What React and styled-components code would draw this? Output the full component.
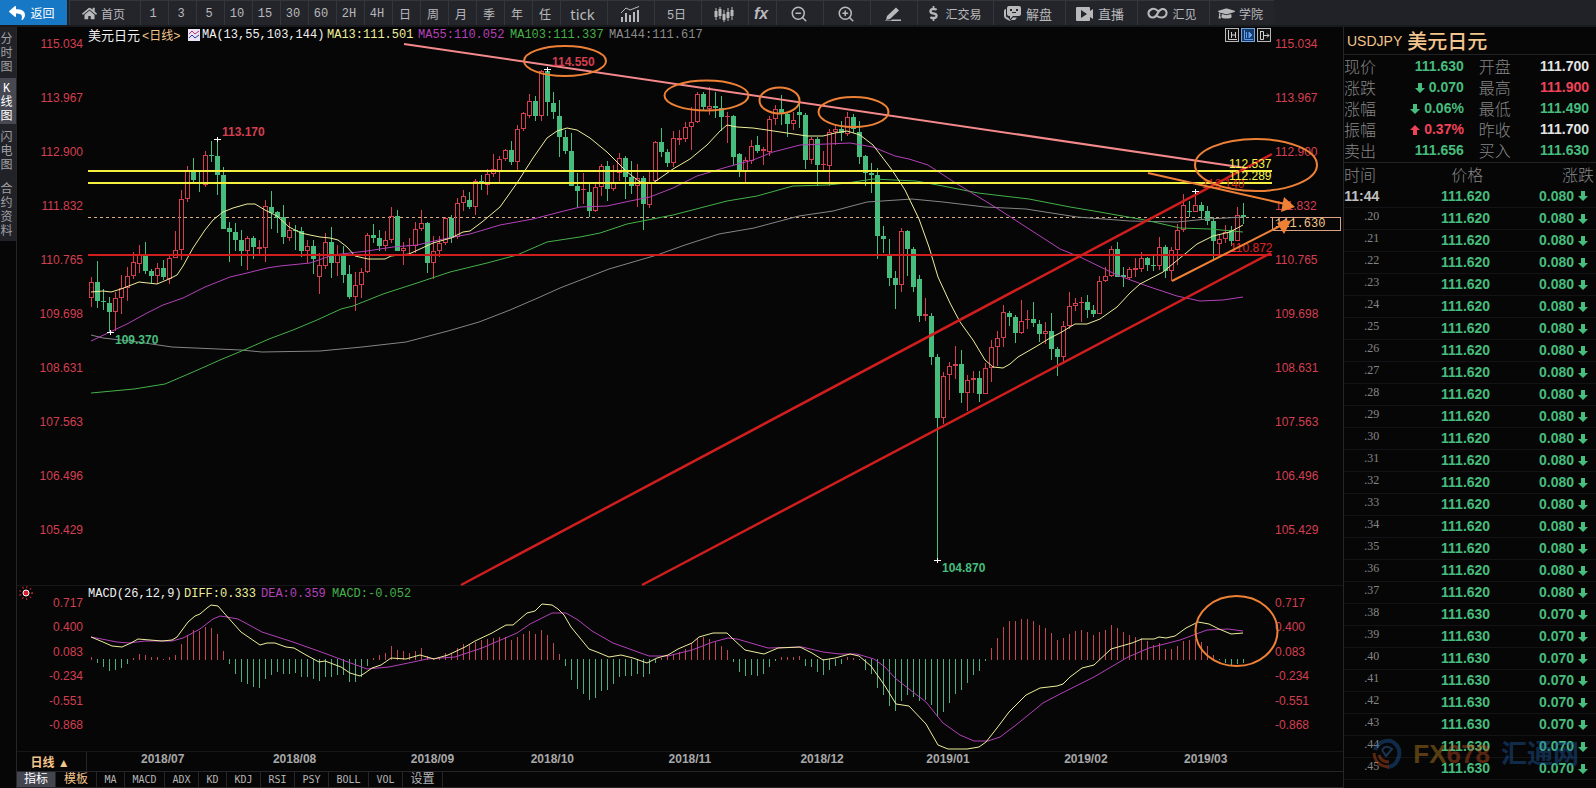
import React from 'react';
import styled, { createGlobalStyle } from 'styled-components';
import {
  FaReply,
  FaHome,
  FaDollarSign,
  FaGraduationCap,
} from 'react-icons/fa';
import { ZoomIn, ZoomOut } from 'lucide-react';

const GlobalStyle = createGlobalStyle`
  * {
    box-sizing: border-box;
  }
  body {
    margin: 0;
    background-color: #060607;
    font-family: 'Liberation Sans', 'Noto Sans CJK SC', sans-serif;
    font-size: 12px;
  }
  button {
    margin: 0;
    padding: 0;
    border: none;
    font-family: inherit;
    cursor: pointer;
  }
`;

const MONO = "'Liberation Mono', 'Noto Sans CJK SC', monospace";
const RED = '#d43f50';
const GREEN = '#46bd7d';
const GOLD = '#f3c48b';
const YELLOW = '#eeee9a';
const PURPLE = '#b341b8';
const ORANGE = '#ee8136';

// candles - [high, body top, body bottom, low, 1 = up], thirds of a pixel
const candleGroups = [
  {
    base: 390,
    rows: [
      [440, 457, 503, 530, 1], [392, 456, 512, 534, 0], [478, 513, 515, 541, 0], [502, 519, 545, 607, 0],
      [485, 505, 545, 603, 1], [435, 475, 503, 553, 1], [412, 438, 473, 512, 1], [367, 397, 437, 448, 1],
      [346, 377, 402, 430, 1], [335, 377, 423, 431, 0], [417, 423, 437, 460, 0], [398, 414, 437, 462, 1],
      [390, 414, 440, 450, 0], [378, 385, 446, 461, 1], [303, 361, 382, 385, 1], [179, 208, 358, 390, 1],
      [108, 124, 206, 215, 1], [84, 123, 149, 155, 0], [125, 159, 162, 185, 0], [62, 76, 163, 170, 1],
      [34, 76, 78, 96, 0], [28, 78, 134, 195, 0], [110, 135, 296, 298, 0], [275, 294, 304, 396, 0],
      [280, 306, 329, 362, 0], [300, 330, 362, 408, 0], [318, 325, 361, 420, 1], [318, 324, 350, 388, 0],
      [330, 352, 355, 373, 1], [210, 228, 352, 396, 1], [182, 231, 248, 298, 0], [243, 248, 262, 308, 0],
      [225, 261, 320, 341, 0], [275, 301, 322, 334, 1], [285, 300, 302, 360, 0], [290, 304, 362, 380, 0],
      [330, 349, 361, 400, 1], [330, 349, 386, 432, 0], [368, 405, 440, 492, 1], [309, 337, 406, 418, 1],
      [290, 337, 398, 443, 0], [345, 374, 398, 437, 1], [348, 377, 434, 458, 0], [405, 432, 500, 506, 0],
      [426, 466, 500, 542, 1], [415, 427, 464, 503, 1], [309, 316, 425, 428, 1], [282, 315, 323, 338, 0],
      [300, 324, 347, 364, 0], [303, 331, 346, 362, 1], [231, 259, 328, 338, 1], [240, 259, 362, 362, 0],
      [335, 355, 362, 405, 1], [325, 346, 348, 374, 1], [275, 298, 348, 368, 1], [240, 279, 296, 302, 1],
      [276, 279, 398, 428, 0], [318, 364, 398, 448, 1], [318, 340, 363, 381, 1], [260, 265, 338, 345, 1],
      [256, 264, 322, 338, 0], [205, 220, 320, 328, 1], [180, 199, 218, 243, 1], [186, 210, 230, 237, 0],
      [146, 153, 229, 254, 1], [135, 153, 160, 180, 0], [117, 132, 164, 196, 1], [72, 118, 130, 140, 1],
      [78, 88, 122, 160, 1], [58, 61, 86, 92, 1], [32, 60, 95, 106, 0], [-16, -2, 95, 122, 1],
    ],
  },
  {
    base: 150,
    rows: [
      [185, 191, 237, 243, 1], [132, 154, 197, 205, 1], [138, 153, 197, 212, 0], [60, 63, 196, 213, 1],
      [58, 63, 155, 197, 0], [127, 159, 185, 207, 0], [150, 198, 260, 321, 0], [240, 262, 302, 311, 0],
      [250, 303, 407, 407, 0], [368, 408, 422, 470, 0], [370, 417, 420, 462, 1], [402, 426, 482, 500, 0],
      [395, 411, 482, 485, 1], [341, 348, 409, 438, 1], [334, 349, 416, 452, 0], [345, 400, 416, 423, 1],
      [309, 325, 368, 392, 1], [318, 324, 380, 448, 0], [334, 381, 408, 432, 0], [342, 385, 407, 470, 1],
      [378, 384, 461, 540, 0], [360, 399, 463, 474, 1], [274, 277, 393, 395, 1], [233, 276, 305, 321, 0],
      [296, 306, 338, 350, 0], [243, 265, 337, 352, 1], [240, 266, 269, 284, 1], [216, 232, 265, 277, 1],
      [170, 216, 230, 300, 1], [126, 132, 214, 218, 1], [126, 132, 171, 180, 0], [110, 169, 176, 194, 1],
      [125, 169, 174, 204, 0], [138, 175, 200, 242, 0], [186, 198, 200, 278, 1], [195, 198, 320, 346, 0],
      [308, 314, 364, 380, 0], [320, 331, 363, 395, 1], [269, 289, 331, 342, 1], [258, 285, 303, 308, 0],
      [290, 299, 303, 346, 1], [198, 208, 304, 318, 1], [166, 178, 206, 226, 1], [135, 177, 192, 226, 0],
      [188, 192, 221, 262, 0], [185, 210, 220, 240, 1], [160, 186, 194, 234, 0], [190, 195, 329, 356, 0],
      [262, 268, 329, 342, 1], [262, 267, 345, 408, 0], [302, 342, 344, 363, 1], [238, 247, 346, 408, 1],
      [226, 237, 244, 286, 1], [213, 238, 247, 273, 0], [186, 202, 250, 258, 1], [192, 202, 236, 250, 0],
      [212, 246, 320, 341, 0], [315, 320, 368, 407, 0], [340, 369, 374, 430, 0], [355, 375, 557, 626, 0],
    ],
  },
  {
    base: 660,
    rows: [
      [17, 48, 55, 98, 0], [57, 108, 174, 197, 0], [153, 174, 194, 267, 0], [25, 34, 194, 217, 1],
      [30, 33, 87, 168, 0], [80, 87, 200, 215, 0], [165, 178, 288, 306, 0], [233, 283, 288, 303, 1],
      [280, 288, 411, 434, 0], [402, 411, 593, 1020, 0], [455, 468, 593, 613, 1], [427, 438, 464, 540, 1],
      [378, 432, 436, 476, 1], [390, 432, 518, 548, 0], [466, 480, 518, 572, 1], [453, 475, 479, 519, 1],
      [452, 474, 521, 545, 0], [428, 445, 521, 522, 1], [361, 381, 443, 486, 1], [332, 354, 380, 437, 1],
      [256, 277, 353, 380, 1], [273, 279, 290, 317, 0], [286, 291, 339, 368, 0], [240, 303, 339, 343, 1],
      [270, 297, 300, 328, 1], [246, 297, 308, 320, 0], [300, 312, 341, 366, 0], [307, 334, 341, 371, 1],
      [280, 333, 386, 420, 0], [381, 387, 410, 468, 0],
    ],
  },
  {
    base: 540,
    rows: [
      [424, 439, 530, 552, 1], [336, 379, 437, 446, 1], [353, 370, 377, 392, 1], [350, 366, 369, 427, 1],
      [345, 366, 390, 415, 0], [376, 390, 401, 410, 0], [289, 303, 401, 403, 1], [262, 289, 302, 306, 1],
      [198, 208, 287, 292, 1], [186, 207, 289, 290, 0], [262, 287, 290, 320, 0], [260, 268, 293, 301, 1],
      [235, 265, 268, 291, 1], [217, 235, 266, 276, 1], [230, 235, 255, 272, 0], [225, 255, 257, 272, 0],
      [171, 202, 257, 269, 1], [196, 202, 272, 293, 0], [200, 211, 272, 304, 1], [132, 151, 208, 255, 1],
      [42, 76, 148, 155, 1], [62, 94, 96, 110, 0], [38, 76, 95, 97, 1], [66, 75, 93, 118, 0],
      [78, 93, 122, 135, 0], [110, 124, 182, 241, 0], [165, 178, 191, 225, 1], [136, 157, 177, 190, 1],
      [138, 150, 182, 197, 0], [80, 107, 181, 182, 1], [68, 105, 110, 132, 0],
    ],
  },
];

const candles = candleGroups.flatMap(({ base, rows }) =>
  rows.map(([h, t, b, l, up]) => ({
    high: Math.round((base + h) / 3),
    top: Math.round((base + t - 1) / 3),
    bottom: Math.round((base + b + 1) / 3),
    low: Math.round((base + l) / 3),
    up,
  }))
);

// MACD bar ends, zero is 238
const macdBars = [
  232, 248, 260, 272, 270, 264, 252, 235, 221, 224, 231, 231, 236, 232, 224, 192, 165, 150, 152, 141,
  143, 163, 213, 251, 283, 305, 312, 320, 323, 297, 285, 276, 283, 283, 278, 290, 290, 296, 302, 290,
  290, 286, 285, 306, 305, 290, 257, 234, 225, 219, 198, 210, 214, 218, 213, 205, 228, 236, 233, 218,
  220, 205, 192, 192, 185, 180, 176, 174, 172, 172, 180, 172, 162, 153, 163, 150, 165, 188, 222, 258,
  300, 327, 342, 360, 354, 333, 330, 312, 292, 289, 289, 282, 292, 282, 250, 234, 226, 222, 215, 208,
  190, 174, 170, 177, 186, 198, 210, 246, 277, 288, 285, 287, 283, 262, 242, 232, 231, 231, 228, 258,
  262, 276, 286, 270, 259, 252, 232, 233, 240, 270, 283, 324, 345, 378, 393, 363, 345, 351, 362, 361,
  376, 410, 396, 369, 342, 331, 309, 286, 273, 243, 204, 173, 140, 122, 123, 116, 117, 122, 134, 144,
  160, 180, 174, 163, 152, 149, 155, 164, 155, 150, 134, 143, 155, 165, 170, 175, 182, 194, 190, 207,
  207, 197, 182, 180, 176, 187, 198, 225, 240, 250, 258, 252, 250,
];

const ma13 =
  '91,292 103,291 111,292 121,289 139,282 157,284 169,279 177,275 183,266 193,248 205,230 213,220 223,212 233,208 247,204 255,204 265,210 277,216 289,227 301,233 310,235 320,237 330,238 338,240 347,247 355,256 368,259 385,259 391,256 409,254 420,249 433,243 451,238 463,232 470,231 482,222 500,207 517,183 533,158 547,138 557,131 567,128 577,130 590,138 607,152 627,172 640,182 653,183 673,169 690,159 707,145 720,131 727,125 737,127 753,128 767,130 787,133 807,136 823,136 835,133 847,131 860,135 873,145 892,170 905,190 919,219 929,247 938,277 950,303 960,322 973,340 985,360 993,367 1003,368 1010,364 1018,357 1037,346 1050,338 1060,333 1075,324 1087,324 1100,319 1117,307 1130,293 1140,284 1163,272 1180,258 1197,244 1213,236 1230,232 1243,225';
const ma55 =
  '91,341 110,332 127,324 147,313 163,305 183,298 205,287 230,277 247,273 267,268 280,266 310,263 333,255 367,251 393,247 417,245 443,239 470,234 500,225 533,219 560,212 580,207 607,206 630,201 650,197 673,188 697,176 727,167 753,160 773,152 800,145 827,144 850,143 873,147 895,156 909,159 928,165 954,182 995,207 1026,227 1060,249 1080,257 1117,275 1147,286 1177,296 1200,301 1223,300 1243,297';
const ma103 =
  '91,393 134,389 165,384 193,372 220,360 244,350 269,339 293,330 317,320 341,309 353,306 383,294 417,283 450,272 487,263 517,255 547,242 560,240 580,237 600,233 627,224 673,215 727,201 757,196 793,186 827,185 847,183 873,179 916,181 943,186 978,193 1029,199 1070,207 1094,211 1145,220 1180,228 1210,229 1243,232';
const ma144 =
  '91,335 103,338 138,342 172,347 241,350 262,352 320,351 362,347 406,342 448,331 479,322 510,310 540,297 560,288 609,269 657,255 685,245 719,234 754,228 799,216 833,211 867,202 912,199 943,202 985,207 1026,209 1077,217 1130,221 1177,222 1207,219 1243,217';
const diffLine =
  '91,637 103,642 112,646 122,647 131,643 138,639 162,641 172,640 177,637 188,622 195,616 200,614 207,608 211,605 218,606 224,613 241,632 260,645 267,643 275,643 286,647 294,648 306,655 319,662 325,661 341,667 350,673 360,676 365,673 372,668 381,665 391,658 406,659 413,657 420,655 434,659 448,655 465,647 475,641 492,633 506,625 513,625 527,613 535,611 542,604 552,605 558,609 564,615 571,627 589,649 597,652 609,657 621,655 633,658 647,663 657,658 668,655 678,649 692,643 699,637 713,633 727,633 733,639 745,650 764,654 778,648 800,647 812,653 823,660 835,658 850,654 859,656 871,666 885,686 896,704 909,706 926,724 938,745 948,749 967,749 979,747 986,742 997,728 1009,712 1026,695 1040,688 1057,686 1063,684 1070,677 1082,668 1094,665 1111,649 1132,643 1142,639 1154,639 1159,637 1166,638 1175,636 1186,628 1198,622 1209,624 1219,629 1231,634 1243,633';
const deaLine =
  '91,637 117,642 129,643 145,641 172,641 183,638 200,629 213,619 220,616 227,617 238,619 262,632 293,642 324,653 348,662 367,669 389,667 413,662 427,659 455,657 482,648 517,633 530,624 544,617 552,613 566,613 578,620 592,631 613,643 649,656 668,656 692,650 713,642 728,638 737,639 768,648 802,647 823,652 840,654 857,654 874,659 885,667 895,678 909,689 926,702 943,723 960,735 974,741 988,741 1000,737 1016,725 1043,703 1060,694 1094,677 1128,657 1149,648 1180,640 1207,630 1228,629 1243,631';

const priceLabels = ['115.034', '113.967', '112.900', '111.832', '110.765', '109.698', '108.631', '107.563', '106.496', '105.429'];
const macdLabels = ['0.717', '0.400', '0.083', '-0.234', '-0.551', '-0.868'];
const months = ['2018/07', '2018/08', '2018/09', '2018/10', '2018/11', '2018/12', '2019/01', '2019/02', '2019/03'];

//layout

const Page = styled.div`
  display: flex;
  flex-direction: column;
  min-height: 100vh;
  color: #b4b4b4;
`;

const Main = styled.main`
  display: flex;
  flex: 1;
`;

//toolbar

const Toolbar = styled.nav`
  display: flex;
  height: 27px;
  background-color: #202228;
  border-bottom: 2px solid #191a1e;
`;

const ToolButton = styled.button`
  display: flex;
  align-items: center;
  justify-content: center;
  gap: ${(props) => props.$gap || 4}px;
  width: ${(props) => props.$w || 28}px;
  padding: 1px 3px 0 0;
  border-left: 1px solid #34363c;
  border-top: 1px solid #34363c;
  background-color: #23252b;
  color: #b9b9bb;
  font-family: ${MONO};
  font-size: ${(props) => props.$size || 12}px;
`;

const BackButton = styled(ToolButton)`
  border: none;
  margin-right: 2px;
  background-color: #1779c6;
  color: #fff;
`;

const TickButton = styled(ToolButton)`
  font-family: 'Noto Sans', sans-serif;
`;

const FxButton = styled(ToolButton)`
  font-family: 'Liberation Sans', sans-serif;
  font-style: italic;
  font-weight: bold;
`;

//side menu

const Side = styled.nav`
  width: 16px;
`;

const SideButton = styled.button`
  display: block;
  width: 16px;
  padding: ${(props) => props.$pad};
  background-color: ${(props) => (props.$on ? '#464852' : '#202228')};
  color: ${(props) => (props.$on ? '#fff' : '#a0a0a2')};
  font-family: ${MONO};
  font-size: 12px;
  line-height: 14px;
  word-break: break-all;
`;

//chart

const Work = styled.section`
  flex: 1;
  min-width: 0;
  border-left: 1px solid #26262a;
`;

const Pane = styled.div`
  display: grid;
  grid-template-columns: 71px 1fr 71px;
  border-bottom: 1px solid #17171a;
`;

const Axis = styled.div`
  position: relative;
  display: flex;
  flex-direction: column;
  justify-content: space-between;
  padding: ${(props) => props.$pad};
  color: ${RED};
  line-height: 14px;
  text-align: ${(props) => props.$align || 'left'};
`;

const CurrentPrice = styled.div`
  position: absolute;
  top: 190px;
  left: 0;
  width: 69px;
  height: 14px;
  padding-left: 2px;
  border: 1px solid #dfa183;
  color: ${GOLD};
  font-family: ${MONO};
  line-height: 13px;
`;

const SunMark = styled.svg`
  position: absolute;
  top: 0;
  left: 2px;
`;

const Plot = styled.div`
  min-width: 0;
`;

const Legend = styled.div`
  display: flex;
  align-items: center;
  height: 15px;
  font-family: ${MONO};
  white-space: nowrap;
`;

const LegendIcon = styled.svg`
  margin-right: 2px;
`;

const LegendItem = styled.span`
  width: ${(props) => props.$w}px;
  color: ${(props) => props.$color};
  font-size: ${(props) => props.$size || 12}px;
`;

const LegendButtons = styled.span`
  display: flex;
  gap: 2px;
  margin: 0 1px 0 auto;
`;

const SmallButton = styled.button`
  width: 14px;
  height: 14px;
  border: 1px solid ${(props) => (props.$on ? '#6fa4de' : '#b8b8b8')};
  background-color: ${(props) => (props.$on ? '#173b6c' : '#111')};
  color: ${(props) => (props.$on ? '#5e9ee8' : '#d0d0d0')};

  svg {
    display: block;
  }
`;

const Graph = styled.svg`
  position: relative;
  z-index: 1;
  display: block;
  width: 100%;
  height: ${(props) => props.$h}px;
  overflow: visible;
  pointer-events: none;
`;

const Mark = styled.text`
  fill: ${(props) => props.$color};
  font-family: 'Liberation Sans', sans-serif;
  font-size: 12px;
  font-weight: ${(props) => (props.$bold ? 'bold' : 'normal')};
`;

const DateRow = styled.div`
  display: grid;
  grid-template-columns: 70px 1fr 72px;
  height: 20px;
  border-bottom: 1px solid #26262a;
`;

const PeriodButton = styled.button`
  padding-right: 3px;
  border-right: 1px solid #26262a;
  background-color: transparent;
  color: ${GOLD};
  font-size: 12px;
  font-weight: bold;
`;

const Dates = styled.div`
  display: grid;
  grid-template-columns: 132fr 138fr 120fr 138fr 132fr 126fr 138fr 120fr 89fr;
  padding-left: 52px;
`;

const DateLabel = styled.span`
  padding-left: 2px;
  color: #a8a8a8;
  font-weight: bold;
  line-height: 15px;
`;

const Tabs = styled.div`
  display: flex;
  height: 15px;
`;

const Tab = styled.button`
  width: ${(props) => props.$w}px;
  border-right: 1px solid #26262a;
  background-color: ${(props) => (props.$on ? '#43454f' : 'transparent')};
  color: ${(props) => props.$color || '#b4b4b4'};
  font-family: 'DejaVu Sans Mono', 'Noto Sans CJK SC', monospace;
  font-size: ${(props) => (props.$cjk ? 12 : 10)}px;
  line-height: 13px;
`;

const ScrollTrack = styled.div`
  height: 3px;
  padding-left: 42%;
  border-top: 1px solid #26262a;
`;

const ScrollThumb = styled.div`
  width: 180px;
  height: 2px;
  background-color: #34343a;
`;

//quote panel

const Quote = styled.aside`
  position: relative;
  width: 253px;
  border-left: 1px solid #26262a;
`;

const QuoteTitle = styled.h1`
  display: flex;
  align-items: center;
  gap: 5px;
  height: 28px;
  margin: 0;
  padding-left: 3px;
  border-bottom: 1px solid #222226;
  color: ${GOLD};
  font-size: 14px;
  font-weight: normal;
`;

const QuoteName = styled.span`
  font-family: 'Noto Sans CJK SC', sans-serif;
  font-size: 20px;
  font-weight: 500;
`;

const QuoteGrid = styled.dl`
  display: grid;
  grid-template-columns: 32px 9fr 47px 8fr;
  grid-auto-rows: 21px;
  height: 107px;
  margin: 0;
  padding: 1px 7px 0 0;
  line-height: 21px;
`;

const QuoteLabel = styled.dt`
  color: #858585;
  font-family: 'Noto Sans CJK SC', sans-serif;
  font-size: 16px;
  font-weight: 300;
  line-height: 20px;
  text-align: right;
`;

const num = `
  font-family: 'Liberation Sans', sans-serif;
  font-size: 14px;
  font-weight: bold;
`;

const QuoteValue = styled.dd`
  ${num}
  margin: 0;
  color: ${(props) => props.$color};
  text-align: right;
`;

const TickTable = styled.table`
  width: 100%;
  border-collapse: collapse;
  table-layout: fixed;
  border-top: 1px solid #222226;
`;

const Th = styled.th`
  width: ${(props) => props.$w};
  height: 23px;
  padding: 0 ${(props) => props.$pad || 0}px 0 0;
  color: #858585;
  font-family: 'Noto Sans CJK SC', sans-serif;
  font-size: 16px;
  font-weight: 300;
  line-height: 21px;
  text-align: ${(props) => props.$align || 'right'};
  white-space: nowrap;
`;

const Td = styled.td`
  ${num}
  height: 22px;
  padding: 0 ${(props) => props.$pad || 0}px 0 0;
  border-bottom: 1px solid #131316;
  color: ${GREEN};
  line-height: 21px;
  text-align: right;
`;

const TimeTd = styled(Td)`
  color: ${(props) => (props.$first ? '#c0c0c0' : '#858585')};
  font-family: ${(props) =>
    props.$first ? "'Liberation Sans', sans-serif" : "'Liberation Serif', serif"};
  font-size: ${(props) => (props.$first ? 14 : 12)}px;
  font-weight: ${(props) => (props.$first ? 'bold' : 'normal')};
  line-height: ${(props) => (props.$first ? 21 : 16)}px;
  vertical-align: top;
`;

const Watermark = styled.div`
  position: absolute;
  right: 17px;
  bottom: 19px;
  display: flex;
  align-items: center;
  gap: 11px;
  font-size: 26px;
  font-weight: bold;
  line-height: 34px;
  opacity: 0.42;
  pointer-events: none;
`;

const WatermarkText = styled.span`
  color: ${(props) => props.$color};
`;

const ArrowValue = styled.span`
  display: flex;
  flex-direction: ${(props) => (props.$before ? 'row-reverse' : 'row')};
  align-items: center;
  justify-content: ${(props) => (props.$before ? 'flex-start' : 'flex-end')};
  gap: 4px;
`;

function Arrow({ up }) {
  return (
    <svg width="10" height="10" viewBox="0 0 10 10" fill="currentColor">
      {up ? <path d="M5 0L10 5H7V10H3V5H0Z" /> : <path d="M5 10L10 5H7V0H3V5H0Z" />}
    </svg>
  );
}

function BarsIcon() {
  return (
    <svg width="20" height="16" viewBox="0 0 20 16" fill="none" stroke="currentColor">
      <path d="M1 7L6 2L10 4L19 0.5" />
      <path d="M2 16V11M6 16V7M10 16V9M14 16V6M18 16V4" strokeWidth="2" />
    </svg>
  );
}

function CandlesIcon() {
  return (
    <svg width="20" height="16" viewBox="0 0 20 16" fill="none" stroke="currentColor">
      <path d="M2 2V14M6 1V13M10 4V16M14 2V15M18 1V14" />
      <path d="M2 5V11M6 3V10M10 8V14M14 6V12M18 4V10" strokeWidth="3" />
    </svg>
  );
}

function PenIcon() {
  return (
    <svg width="18" height="16" viewBox="0 0 18 16" fill="currentColor">
      <path d="M3 10L12 1.5L15 4.5L6 13L2 14Z" />
      <path d="M8 13.5H17V15H1V14.5H7Z" />
    </svg>
  );
}

function ChatIcon() {
  return (
    <svg width="17" height="15" viewBox="0 0 17 15" fill="currentColor">
      <path d="M5 0H15Q17 0 17 2V8Q17 10 15 10H9L6 13V10H5Q3 10 3 8V2Q3 0 5 0Z" />
      <path d="M2 3V10Q2 11.500 4 11.500L6 14H11L13 11.500H9L6 15L2 13Q0 12 0 10V5Q0 3 2 3Z" />
      <path d="M6 3H8V5H6ZM12 3H14V5H12ZM8 6H12V7H8Z" fill="#23252b" />
    </svg>
  );
}

function VideoIcon() {
  return (
    <svg width="17" height="14" viewBox="0 0 17 14" fill="currentColor">
      <path
        fillRule="evenodd"
        d="M1 0H13Q14 0 14 1V4L17 2V12L14 10V13Q14 14 13 14H1Q0 14 0 13V1Q0 0 1 0ZM5 3V11L11 7Z"
      />
    </svg>
  );
}

// two open links, one hooked into the other
function LoopIcon() {
  return (
    <svg width="21" height="13" viewBox="0 0 21 13" fill="none" stroke="currentColor" strokeWidth="2">
      <path d="M11 4Q8 1 5 2Q1 3.500 1.500 7Q2.500 11 6.500 10.500Q9 10 10.500 6.500Q12 3 15 2Q18.500 1.500 19.500 5Q20 9.500 15.500 10.500Q12.500 11 10 9" />
    </svg>
  );
}

function Cross({ x, y }) {
  return <path d={`M${x - 3} ${y + 0.5}H${x + 4}M${x + 0.5} ${y - 2}V${y + 3}`} stroke="#fff" />;
}

function Curve({ points, color }) {
  return <polyline points={points} fill="none" stroke={color} />;
}

function PriceGraph() {
  return (
    <Graph $h={543} viewBox="88 42 1184 543" role="img" aria-label="美元日元 日线">
      <path d="M88 217.500H1272" stroke="#dfae80" strokeDasharray="3 3" />
      {candles.map((c, i) => {
        const x = 91 + i * 6;
        const color = c.up ? RED : GREEN;
        const flat = c.bottom - c.top < 2;
        return (
          <g key={i} shapeRendering="crispEdges">
            <path d={`M${x + 0.5} ${c.high}V${c.top}M${x + 0.5} ${c.bottom}V${c.low}`} stroke={color} />
            {c.up && !flat ? (
              <rect x={x - 1.5} y={c.top + 0.5} width="4" height={c.bottom - c.top - 1} fill="none" stroke={color} />
            ) : (
              <rect x={x - 2} y={c.top} width="5" height={Math.max(1, c.bottom - c.top)} fill={color} />
            )}
          </g>
        );
      })}
      <Curve points={ma144} color="#858585" />
      <Curve points={ma103} color="#45b048" />
      <Curve points={ma55} color={PURPLE} />
      <Curve points={ma13} color={YELLOW} />
      <path d="M88 255H1272" stroke="#d01d1d" strokeWidth="2" />
      <path d="M88 171H1272M88 183H1272" stroke="#f5f040" strokeWidth="2" />
      <Mark $color="#c9281c" x="1202" y="188">112.140</Mark>
      <Mark $color="#e02222" x="1230" y="252">110.872</Mark>
      <path d="M461 585L1272 154M642 585L1271 253" stroke="#d01d1d" strokeWidth="2.5" />
      <path d="M404 44L1246 168" stroke="#f4898c" strokeWidth="2" />
      <Mark $bold $color={RED} x="222" y="136">113.170</Mark>
      <Mark $bold $color={RED} x="552" y="66">114.550</Mark>
      <Mark $bold $color={GREEN} x="115" y="344">109.370</Mark>
      <Mark $bold $color={GREEN} x="942" y="572">104.870</Mark>
      <Mark $color="#f8f24a" x="1229" y="168">112.537</Mark>
      <Mark $color="#f8f24a" x="1229" y="180">112.289</Mark>
      <Cross x={217} y={139} />
      <Cross x={547} y={69} />
      <Cross x={110} y={332} />
      <Cross x={937} y={560} />
      <Cross x={1195} y={191} />
      <g fill="none" stroke={ORANGE} strokeWidth="2">
        <ellipse cx="565" cy="61" rx="41" ry="15" />
        <ellipse cx="706.500" cy="95.500" rx="42" ry="15" />
        <ellipse cx="779.500" cy="100.500" rx="20" ry="13" />
        <ellipse cx="853.500" cy="112" rx="35" ry="15" />
        <ellipse cx="1256" cy="165" rx="61" ry="26" />
        <path d="M1148 173L1285 204M1172 281L1282 225" />
      </g>
      <path d="M1284 197L1295 207L1281 212ZM1277 223L1284 220L1291 221L1284 234Z" fill={ORANGE} />
    </Graph>
  );
}

function MacdGraph() {
  return (
    <Graph $h={150} viewBox="88 601 1184 150" role="img" aria-label="MACD">
      {macdBars.map((end, i) => (
        <path
          key={i}
          d={`M${91.5 + i * 6} ${end < 238 ? 660 : 659}V${Math.round(580 + end / 3)}`}
          stroke={end < 238 ? '#c44552' : '#4fae80'}
        />
      ))}
      <Curve points={deaLine} color={PURPLE} />
      <Curve points={diffLine} color={YELLOW} />
      <ellipse cx="1236.500" cy="631" rx="41" ry="35" fill="none" stroke={ORANGE} strokeWidth="2" />
    </Graph>
  );
}

const periods = ['1', '3', '5', '10', '15', '30', '60', '2H', '4H', '日', '周', '月', '季', '年', '任'];

const tabs = [
  ['MA', 28],
  ['MACD', 40],
  ['ADX', 34],
  ['KD', 28],
  ['KDJ', 34],
  ['RSI', 34],
  ['PSY', 34],
  ['BOLL', 40],
  ['VOL', 34],
];

const quotes = [
  ['现价', '111.630', GREEN, '', '开盘', '111.700', '#e4e4e4'],
  ['涨跌', '0.070', GREEN, 'down', '最高', '111.900', '#f04358'],
  ['涨幅', '0.06%', GREEN, 'down', '最低', '111.490', GREEN],
  ['振幅', '0.37%', '#f04358', 'up', '昨收', '111.700', '#e4e4e4'],
  ['卖出', '111.656', GREEN, '', '买入', '111.630', GREEN],
];

const ticks = ['11:44'];
for (let s = 20; s <= 45; s++) ticks.push(`.${s}`);

function App() {
  return (
    <Page>
      <GlobalStyle />
      <Toolbar>
        <BackButton $w={67} $gap={5}>
          <FaReply size={16} />
          返回
        </BackButton>
        <ToolButton $w={71}>
          <FaHome size={15} />
          首页
        </ToolButton>
        {periods.map((p) => (
          <ToolButton key={p}>{p}</ToolButton>
        ))}
        <TickButton $w={47} $size={15}>tick</TickButton>
        <ToolButton $w={47} aria-label="指标图"><BarsIcon /></ToolButton>
        <ToolButton $w={47}>5日</ToolButton>
        <ToolButton $w={47} aria-label="K线"><CandlesIcon /></ToolButton>
        <FxButton $w={28} $size={16}>fx</FxButton>
        <ToolButton $w={47} aria-label="缩小"><ZoomOut size={18} /></ToolButton>
        <ToolButton $w={47} aria-label="放大"><ZoomIn size={18} /></ToolButton>
        <ToolButton $w={47} aria-label="画线"><PenIcon /></ToolButton>
        <ToolButton $w={76}>
          <FaDollarSign size={15} />
          汇交易
        </ToolButton>
        <ToolButton $w={72} $size={13} $gap={5}>
          <ChatIcon />
          解盘
        </ToolButton>
        <ToolButton $w={72} $size={13} $gap={5}>
          <VideoIcon />
          直播
        </ToolButton>
        <ToolButton $w={72}>
          <LoopIcon />
          汇见
        </ToolButton>
        <ToolButton $w={65}>
          <FaGraduationCap size={17} />
          学院
        </ToolButton>
      </Toolbar>
      <Main>
        <Side>
          <SideButton $pad="6px 3px 3px 0">分时图</SideButton>
          <SideButton $on $pad="4px 3px 0 0">K线图</SideButton>
          <SideButton $pad="7px 3px 7px 0">闪电图</SideButton>
          <SideButton $pad="3px 3px 2px 0">合约资料</SideButton>
        </Side>
        <Work>
          <Pane>
            <Axis $align="right" $pad="10px 5px 48px 0">
              {priceLabels.map((p) => (
                <span key={p}>{p}</span>
              ))}
            </Axis>
            <Plot>
              <Legend>
                <LegendItem $w={54} $size={13} $color="#f0f0f0">美元日元</LegendItem>
                <LegendItem $w={46} $color={GOLD}>&lt;日线&gt;</LegendItem>
                <LegendIcon width="12" height="12" viewBox="0 0 12 12">
                  <rect width="12" height="12" fill="#e8e4f4" />
                  <path d="M1 5L4 2L7 5L11 2" fill="none" stroke="#c03070" />
                  <path d="M1 9L4 6L7 9L11 6" fill="none" stroke="#3434a8" />
                </LegendIcon>
                <LegendItem $w={125} $color="#f0f0f0">MA(13,55,103,144)</LegendItem>
                <LegendItem $w={91} $color={YELLOW}>MA13:111.501</LegendItem>
                <LegendItem $w={92} $color={PURPLE}>MA55:110.052</LegendItem>
                <LegendItem $w={99} $color="#45b048">MA103:111.337</LegendItem>
                <LegendItem $color="#8c8c8c">MA144:111.617</LegendItem>
                <LegendButtons>
                  <SmallButton aria-label="左移">
                    <svg width="12" height="12" viewBox="0 0 12 12" fill="none" stroke="currentColor">
                      <path d="M2.500 1V10.500H11M5.500 3V9M9.500 3V9M9 6H6" />
                    </svg>
                  </SmallButton>
                  <SmallButton $on aria-label="播放">
                    <svg width="12" height="12" viewBox="0 0 12 12" fill="none" stroke="currentColor">
                      <path d="M2.500 1V10.500H11M4.500 3V9" />
                      <path d="M7 3L10 6L7 9Z" fill="currentColor" />
                    </svg>
                  </SmallButton>
                  <SmallButton aria-label="右移">
                    <svg width="12" height="12" viewBox="0 0 12 12" fill="none" stroke="currentColor">
                      <path d="M2.500 2V10.500H5.500V2.500H2M5 6.500H11M9 4.500L11 6.500L9 8.500" />
                    </svg>
                  </SmallButton>
                </LegendButtons>
              </Legend>
              <PriceGraph />
            </Plot>
            <Axis $pad="10px 0 48px 3px">
              {priceLabels.map((p) => (
                <span key={p}>{p}</span>
              ))}
              <CurrentPrice>111.630</CurrentPrice>
            </Axis>
          </Pane>
          <Pane>
            <Axis $align="right" $pad="10px 5px 19px 0">
              <SunMark width="14" height="14" viewBox="0 0 14 14">
                <circle cx="7" cy="7" r="6" fill="none" stroke="#c82828" strokeWidth="2" strokeDasharray="1 3" />
                <circle cx="7" cy="7" r="3" fill="#d81e2c" stroke="#fff" />
              </SunMark>
              {macdLabels.map((p) => (
                <span key={p}>{p}</span>
              ))}
            </Axis>
            <Plot>
              <Legend>
                <LegendItem $w={96} $color="#f0f0f0">MACD(26,12,9)</LegendItem>
                <LegendItem $w={77} $color={YELLOW}>DIFF:0.333</LegendItem>
                <LegendItem $w={71} $color={PURPLE}>DEA:0.359</LegendItem>
                <LegendItem $color="#45b048">MACD:-0.052</LegendItem>
              </Legend>
              <MacdGraph />
            </Plot>
            <Axis $pad="10px 0 19px 3px">
              {macdLabels.map((p) => (
                <span key={p}>{p}</span>
              ))}
            </Axis>
          </Pane>
          <DateRow>
            <PeriodButton>日线 ▲</PeriodButton>
            <Dates>
              {months.map((m) => (
                <DateLabel key={m}>{m}</DateLabel>
              ))}
            </Dates>
          </DateRow>
          <Tabs>
            <Tab $on $cjk $w={39} $color="#fff">指标</Tab>
            <Tab $cjk $w={41} $color={GOLD}>模板</Tab>
            {tabs.map(([name, w]) => (
              <Tab key={name} $w={w}>{name}</Tab>
            ))}
            <Tab $cjk $w={40}>设置</Tab>
          </Tabs>
          <ScrollTrack>
            <ScrollThumb />
          </ScrollTrack>
        </Work>
        <Quote>
          <QuoteTitle>
            USDJPY
            <QuoteName>美元日元</QuoteName>
          </QuoteTitle>
          <QuoteGrid>
            {quotes.map(([a, va, ca, dir, b, vb, cb]) => (
              <React.Fragment key={a}>
                <QuoteLabel>{a}</QuoteLabel>
                <QuoteValue $color={ca}>
                  {dir ? (
                    <ArrowValue $before>
                      {va}
                      <Arrow up={dir === 'up'} />
                    </ArrowValue>
                  ) : (
                    va
                  )}
                </QuoteValue>
                <QuoteLabel>{b}</QuoteLabel>
                <QuoteValue $color={cb}>{vb}</QuoteValue>
              </React.Fragment>
            ))}
          </QuoteGrid>
          <TickTable>
            <thead>
              <tr>
                <Th $w="14%" $align="left">时间</Th>
                <Th $w="44%" $pad={7}>价格</Th>
                <Th $w="42%" $pad={2}>涨跌</Th>
              </tr>
            </thead>
            <tbody>
              {ticks.map((t, i) => (
                <tr key={t}>
                  <TimeTd $first={i === 0}>{t}</TimeTd>
                  <Td>{i < 19 ? '111.620' : '111.630'}</Td>
                  <Td $pad={8}>
                    <ArrowValue>
                      {i < 19 ? '0.080' : '0.070'}
                      <Arrow />
                    </ArrowValue>
                  </Td>
                </tr>
              ))}
            </tbody>
          </TickTable>
          <Watermark aria-hidden="true">
            <svg width="30" height="32" viewBox="0 0 30 32" fill="none" strokeWidth="4">
              <path d="M3 12Q8 1 19 3Q29 8 27 18Q24 29 15 29" stroke="#1f5fa8" />
              <path d="M2 15Q3 28 17 29M7 17Q9 24 17 24" stroke="#c8501e" strokeWidth="3" />
              <path d="M10 12L14 18L20 11Q14 6 10 12" stroke="#3a74b8" strokeWidth="2" />
            </svg>
            <span>
              <WatermarkText $color="#c88a1e">FX</WatermarkText>
              <WatermarkText $color="#c8501e">678</WatermarkText>
            </span>
            <WatermarkText $color="#1f5fa8">汇通网</WatermarkText>
          </Watermark>
        </Quote>
      </Main>
    </Page>
  );
}

export default App;
